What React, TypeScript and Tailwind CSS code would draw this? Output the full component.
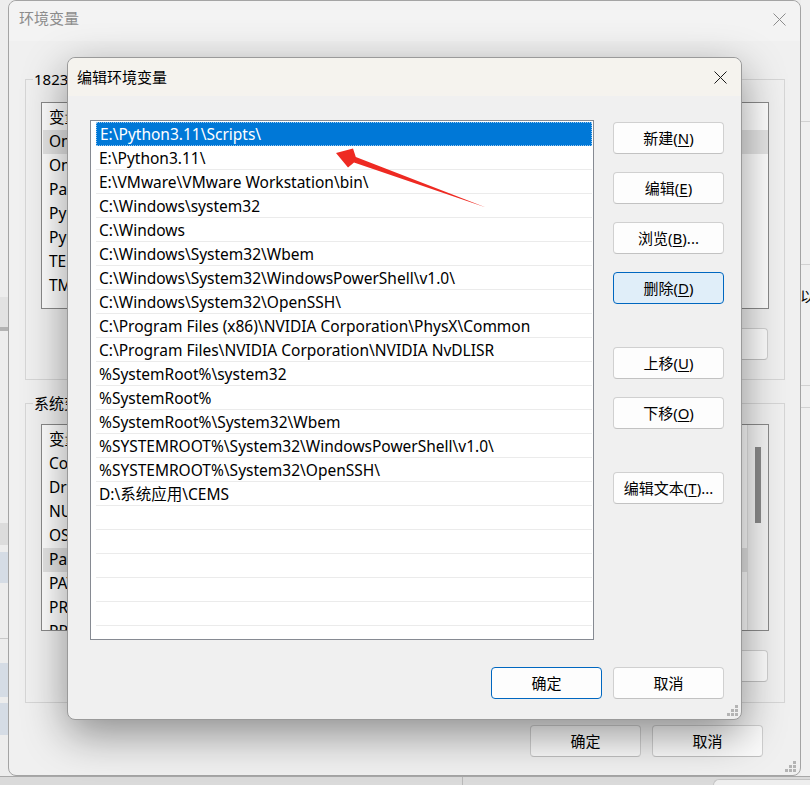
import React from "react";

const paths = [
	"E:\\Python3.11\\Scripts\\",
	"E:\\Python3.11\\",
	"E:\\VMware\\VMware Workstation\\bin\\",
	"C:\\Windows\\system32",
	"C:\\Windows",
	"C:\\Windows\\System32\\Wbem",
	"C:\\Windows\\System32\\WindowsPowerShell\\v1.0\\",
	"C:\\Windows\\System32\\OpenSSH\\",
	"C:\\Program Files (x86)\\NVIDIA Corporation\\PhysX\\Common",
	"C:\\Program Files\\NVIDIA Corporation\\NVIDIA NvDLISR",
	"%SystemRoot%\\system32",
	"%SystemRoot%",
	"%SystemRoot%\\System32\\Wbem",
	"%SYSTEMROOT%\\System32\\WindowsPowerShell\\v1.0\\",
	"%SYSTEMROOT%\\System32\\OpenSSH\\",
	"D:\\系统应用\\CEMS",
];

const userVars = ["OneDrive", "OneDriveConsumer", "Path", "PyCharm", "PyCharm Community Edition", "TEMP", "TMP"];
const sysVars = ["ComSpec", "DriverData", "NUMBER_OF_PROCESSORS", "OS", "Path", "PATHEXT", "PROCESSOR_ARCHITECTURE", "PROCESSOR_IDENTIFIER"];

function CloseIcon({ color }: { color: string }) {
	return (
		<svg width="13" height="13" viewBox="0 0 13 13" fill="none">
			<path d="M0.5 0.5 L12.5 12.5 M12.5 0.5 L0.5 12.5" stroke={color} strokeWidth="1" />
		</svg>
	);
}

function Grip() {
	return (
		<svg width="11" height="11" viewBox="0 0 11 11">
			{[
				[8, 0],
				[4, 4],
				[8, 4],
				[0, 8],
				[4, 8],
				[8, 8],
			].map(([x, y], i) => (
				<rect key={i} x={x} y={y} width="3" height="3" fill="#b4b4b4" />
			))}
		</svg>
	);
}

function Btn({ children, className = "" }: { children: React.ReactNode; className?: string }) {
	return (
		<div className={`h-[32px] w-[111px] flex items-center justify-center rounded-[4px] border text-[15px] text-black ${className || "bg-[#fdfdfd] border-[#d0d0d0] border-b-[#c2c2c2]"}`}>
			{children}
		</div>
	);
}

// list of variables in the back window
function VarList({ header, rows, active, scroll }: { header: string; rows: string[]; active: number; scroll?: boolean }) {
	return (
		<div className="h-full border border-[#8a8a8a] bg-white flex overflow-hidden">
			<div className="flex-1 flex flex-col pt-[3px] pl-[1px]">
				<div className="h-[24px] shrink-0 flex items-center pl-[6px] text-[15.5px]">{header}</div>
				{rows.map((r, i) => (
					<div key={r} className={`h-[24px] shrink-0 flex items-center pl-[6px] text-[15.5px] whitespace-nowrap ${i === active ? "bg-[#e5e5e5]" : ""}`}>
						{r}
					</div>
				))}
			</div>
			{scroll && (
				<div className="w-[21px] bg-[#f4f4f4] border-l border-[#e2e2e2] flex justify-center pt-[22px]">
					<div className="w-[6px] h-[76px] bg-[#8a8a8a]" />
				</div>
			)}
		</div>
	);
}

export default function App() {
	return (
		<div className="relative w-[810px] h-[785px] overflow-hidden bg-[#ededed] font-['Noto_Sans','Noto_Sans_CJK_SC',sans-serif] text-black">
			{/* far background window strips */}
			<div className="flex flex-col h-full">
				<div className="flex-1 flex justify-between">
					<div className="w-[8px] flex flex-col">
						<div className="h-[297px]" />
						<div className="h-[30px] bg-[#e2e2e2]" />
						<div className="h-[4px] bg-[#b3b3b3]" />
						<div className="h-[192px]" />
						<div className="h-[22px] bg-[#dcdcdc]" />
						<div className="h-[7px]" />
						<div className="h-[31px] bg-[#d5dce5]" />
						<div className="h-[55px]" />
						<div className="h-[1px] bg-[#c8c8c8]" />
						<div className="h-[24px]" />
						<div className="h-[34px] bg-[#d5dce5]" />
						<div className="h-[6px]" />
						<div className="h-[32px] bg-[#d5dce5]" />
					</div>
					<div className="w-[9px] flex flex-col bg-[#f0f0f0] overflow-hidden">
						<div className="h-[121px]" />
						<div className="h-[1px] bg-[#d2d2d2]" />
						<div className="h-[142px]" />
						<div className="h-[1px] bg-[#d2d2d2]" />
						<div className="h-[22px]" />
						<div className="h-[18px] text-[15px] leading-[18px] whitespace-nowrap -ml-[1px]">以</div>
						<div className="h-[80px]" />
						<div className="h-[1px] bg-[#d2d2d2]" />
						<div className="h-[21px]" />
						<div className="h-[1px] bg-[#d2d2d2]" />
					</div>
				</div>
				<div className="h-[9px] bg-[#dadada] border-t border-[#a8a8a8] flex">
					<div className="w-[463px] border-r border-[#b8b8b8]" />
					<div className="flex-1" />
					<div className="w-[97px] mt-[2px] rounded-tl-[6px] border-l border-t border-[#c4c4c4] bg-[#eeeeee]" />
				</div>
			</div>

			{/* back window: 环境变量 */}
			<div className="absolute left-[8px] top-0 w-[793px] h-[776px] rounded-[8px] border border-[#a4a4a4] bg-[#f0f0f0] flex flex-col">
				<div className="h-[40px] flex items-center justify-between pl-[10px] pr-[14px] bg-[#f3f3f3] rounded-t-[8px]">
					<span className="text-[15px] text-[#8c8c8c] -mt-[5px]">环境变量</span>
					<div className="-mt-[4px]">
						<CloseIcon color="#8c8c8c" />
					</div>
				</div>
				<div className="flex-1 flex flex-col pt-[28px] pl-[16px] pr-[15px]">
					<fieldset className="h-[311px] border border-[#d6d6d6] flex flex-col">
						<legend className="ml-[7px] px-[1px] text-[15px] leading-[20px]">18238的用户变量(U)</legend>
						<div className="mt-[13px] mx-[15px] h-[207px]">
							<VarList header="变量" rows={userVars} active={0} />
						</div>
						<div className="mt-[19px] mx-[15px] flex justify-end gap-[11px] pr-[1px]">
							<Btn>新建(N)...</Btn>
							<Btn>编辑(E)...</Btn>
							<Btn>删除(D)</Btn>
						</div>
					</fieldset>
					<fieldset className="mt-[13px] h-[310px] border border-[#d6d6d6] flex flex-col">
						<legend className="ml-[7px] px-[1px] text-[15px] leading-[20px]">系统变量(S)</legend>
						<div className="mt-[11px] mx-[15px] h-[207px]">
							<VarList header="变量" rows={sysVars} active={4} scroll />
						</div>
						<div className="mt-[19px] mx-[15px] flex justify-end gap-[11px] pr-[1px]">
							<Btn>新建(W)...</Btn>
							<Btn>编辑(I)...</Btn>
							<Btn>删除(L)</Btn>
						</div>
					</fieldset>
					<div className="mt-[22px] flex justify-end gap-[11px] pr-[22px]">
						<Btn className="bg-[#fbfbfb] border-[#cfcfcf] border-b-[#c0c0c0] w-[110px]">确定</Btn>
						<Btn className="bg-[#fbfbfb] border-[#cfcfcf] border-b-[#c0c0c0] w-[110px]">取消</Btn>
					</div>
				</div>
				<div className="absolute right-[4px] bottom-[3px]">
					<Grip />
				</div>
			</div>

			{/* front dialog: 编辑环境变量 */}
			<div className="absolute left-[67px] top-[57px] w-[675px] h-[663px] rounded-[8px] border border-[#9a9a9a] bg-[#f0f0f0] shadow-[0_14px_44px_rgba(0,0,0,0.42)] flex flex-col">
				<div className="h-[38px] flex items-center justify-between pl-[9px] pr-[14px] bg-[#f5f3ee] rounded-t-[8px]">
					<span className="text-[15px]">编辑环境变量</span>
					<CloseIcon color="#1a1a1a" />
				</div>
				<div className="flex pl-[22px] pt-[24px]">
					<div className="w-[504px] h-[520px] border border-[#868a92] bg-white overflow-hidden pt-[1px] pl-[5px] pr-[1px]">
						{Array.from({ length: 22 }).map((_, i) => {
							const text = paths[i];
							const sel = i === 0;
							return (
								<div
									key={i}
									className={`h-[24px] flex items-center pl-[3px] pt-[2px] text-[15.5px] whitespace-nowrap ${
										sel ? "bg-[#0078d7] text-white border border-dotted border-[#9cc8ee]" : "border-b border-[#ebebeb]"
									}`}
								>
									{text}
								</div>
							);
						})}
					</div>
					<div className="ml-[19px] pt-[2px] flex flex-col">
						<Btn>
							新建(<span className="underline underline-offset-2">N</span>)
						</Btn>
						<div className="mt-[18px]">
							<Btn>
								编辑(<span className="underline underline-offset-2">E</span>)
							</Btn>
						</div>
						<div className="mt-[18px]">
							<Btn>
								浏览(<span className="underline underline-offset-2">B</span>)...
							</Btn>
						</div>
						<div className="mt-[18px]">
							<Btn className="bg-[#e0eef9] border-[#0067c0]">
								删除(<span className="underline underline-offset-2">D</span>)
							</Btn>
						</div>
						<div className="mt-[43px]">
							<Btn>
								上移(<span className="underline underline-offset-2">U</span>)
							</Btn>
						</div>
						<div className="mt-[18px]">
							<Btn>
								下移(<span className="underline underline-offset-2">O</span>)
							</Btn>
						</div>
						<div className="mt-[43px]">
							<Btn>
								编辑文本(<span className="underline underline-offset-2">T</span>)...
							</Btn>
						</div>
					</div>
				</div>
				<div className="mt-[27px] flex justify-end gap-[11px] pr-[17px]">
					<Btn className="bg-[#fdfdfd] border-[#0067c0]">确定</Btn>
					<Btn>取消</Btn>
				</div>
				<div className="absolute right-[3px] bottom-[3px]">
					<Grip />
				</div>
			</div>

			{/* red annotation arrow */}
			<svg className="absolute left-[330px] top-[140px]" width="160" height="72" viewBox="330 140 160 72">
				<polygon points="336,153 353,148.5 355.8,157 486,207.5 354,162.5 348,167.5" fill="#ee2a22" />
			</svg>
		</div>
	);
}
